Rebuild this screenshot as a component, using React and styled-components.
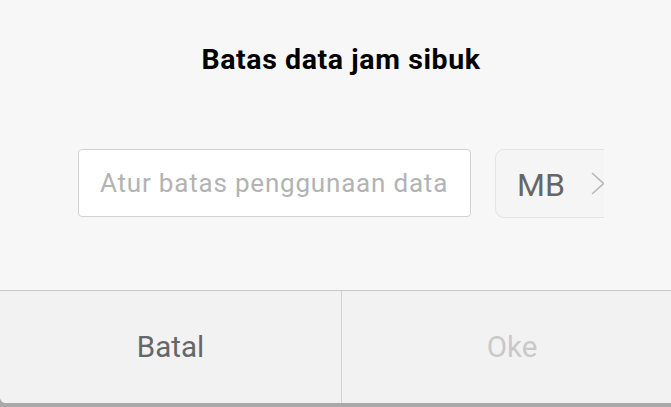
import React from "react";
import styled, { createGlobalStyle } from "styled-components";

const Global = createGlobalStyle`
  html, body { margin: 0; padding: 0; background: #a9a9a9; }
  body { font-family: Roboto, "Noto Sans", "Liberation Sans", sans-serif; }
  #root { width: 671px; height: 407px; overflow: hidden; }
`;

/* The sheet is a little wider than the window, so its right edge runs off screen. */
const Dialog = styled.div`
  width: 682px;
  height: 403px;
  background: #f7f7f7;
  border-radius: 0 0 6px 6px;
  overflow: hidden;
  display: flex;
  flex-direction: column;
`;

const Title = styled.h1`
  margin: 0;
  padding-top: 40px;
  height: 40px;
  text-align: center;
  font-size: 28.5px;
  letter-spacing: 0.6px;
  font-weight: 700;
  color: #000;
  line-height: 40px;
`;

const Body = styled.div`
  flex: 1;
  display: flex;
  align-items: flex-start;
  padding: 69px 0 0 78px;
  gap: 24px;
`;

const Field = styled.div`
  width: 393px;
  height: 68px;
  box-sizing: border-box;
  background: #fff;
  border: 1px solid #d2d2d2;
  border-radius: 4px;
  display: flex;
  align-items: center;
  padding-left: 21px;
  font-size: 26px;
  letter-spacing: 0.8px;
  color: #b3b3b3;
`;

const UnitClip = styled.div`
  width: 109px;
  height: 69px;
  overflow: hidden;
`;

const UnitPicker = styled.div`
  width: 150px;
  height: 69px;
  box-sizing: border-box;
  border: 1px solid #e4e4e4;
  border-radius: 9px;
  background: #f5f5f5;
  display: flex;
  align-items: center;
  padding: 3px 0 0 21px;
  gap: 26px;
  font-size: 32px;
  color: #666;
  svg { margin-top: -3px; }
`;

const Footer = styled.div`
  height: 112px;
  border-top: 1px solid #c9c9c9;
  background: #f2f2f2;
  display: grid;
  grid-template-columns: 1fr 1fr;
`;

const Action = styled.button`
  border: none;
  background: transparent;
  font-family: inherit;
  font-size: 29.5px;
  color: ${(p) => (p.$disabled ? "#c9c9c9" : "#666")};
  padding: 0;
  & + & { border-left: 1px solid #d2d2d2; }
`;

export default function App() {
  return (
    <>
      <Global />
      <Dialog>
        <Title>Batas data jam sibuk</Title>
        <Body>
          <Field>Atur batas penggunaan data</Field>
          <UnitClip>
            <UnitPicker>
              <span>MB</span>
              <svg width="14" height="23" viewBox="0 0 14 23">
                <path d="M1 1 L12.5 11.5 L1 22" fill="none" stroke="#b8b8b8" strokeWidth="1.6" />
              </svg>
            </UnitPicker>
          </UnitClip>
        </Body>
        <Footer>
          <Action>Batal</Action>
          <Action $disabled>Oke</Action>
        </Footer>
      </Dialog>
    </>
  );
}
